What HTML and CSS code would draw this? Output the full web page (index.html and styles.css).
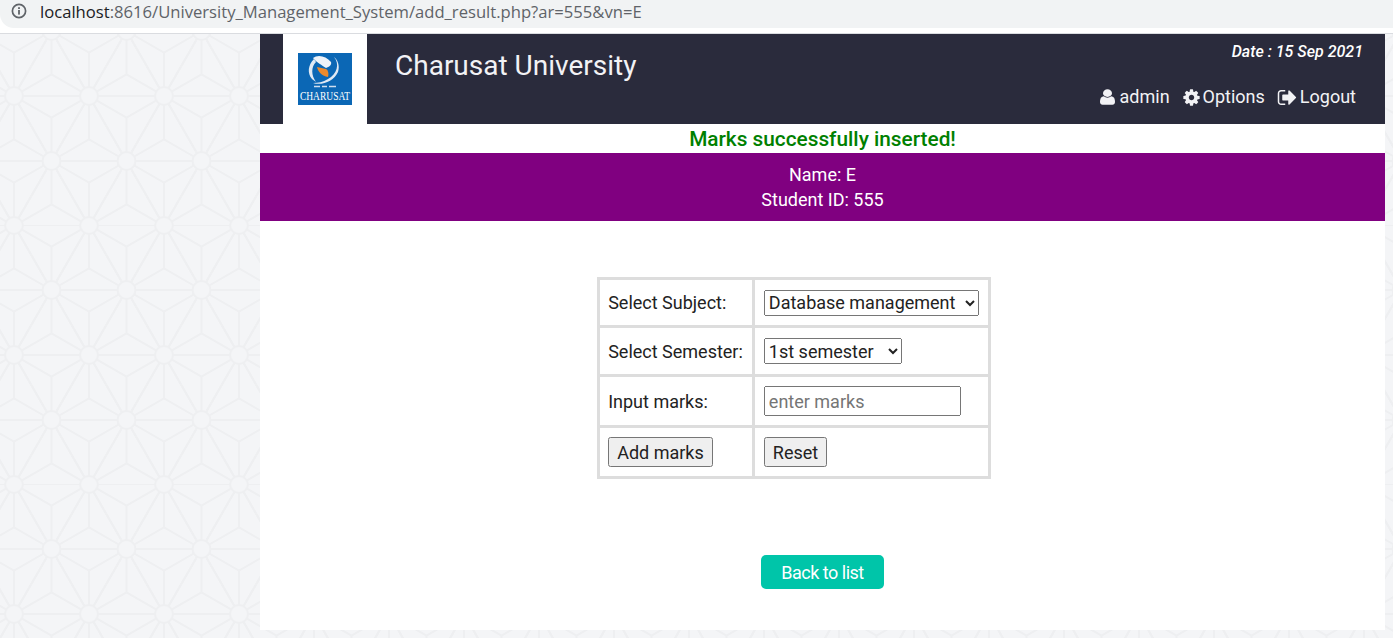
FILE: index.html
```html
<!DOCTYPE html>
<html lang="en">
<head>
  <meta charset="UTF-8" />
  <meta name="viewport" content="width=device-width, initial-scale=1.0"/>
  <title>Add Result</title>
  <link rel="stylesheet" href="styles.css">
</head>
<body>

  <div class="browser-bar">
    <div class="address">
      <svg class="info-icon" width="16" height="16" viewBox="0 0 16 16">
        <circle cx="8" cy="8" r="6.6" fill="none" stroke="#5f6368" stroke-width="1.7"/>
        <rect x="7.1" y="7" width="1.8" height="4.6" fill="#5f6368"/>
        <rect x="7.1" y="4.2" width="1.8" height="1.8" fill="#5f6368"/>
      </svg>
      <span class="url"><span class="host">localhost</span>:8616/University_Management_System/add_result.php?ar=555&amp;vn=E</span>
    </div>
  </div>

  <div class="page">
    <div class="header">
      <div class="logo-box">
        <svg width="54" height="52" viewBox="0 0 54 52">
          <rect width="54" height="52" fill="#0b67b5"/>
          <path d="M15 5 C20 1 28 3 33 9 C34 12 31 14 28 15 C24 12 19 10 15 5 Z" fill="#eef3f9"/>
          <path d="M16 6 C10 12 9 20 14 26 C15 27 17 28 18 29 C13 22 13 14 18 9 Z" fill="#dfe9f4"/>
          <path d="M36 4 C42 11 39 21 30 26 C25 29 20 30 15 30 C24 33 36 28 40 19 C42 13 40 7 36 4 Z" fill="#dfe9f4"/>
          <path d="M19 14 C20 19 24 23 30 24 C31 20 30 17 28 16 Z" fill="#ec8a2d"/>
          <path d="M16 33.5h6M24 33.5h5M31 33.5h7" stroke="#cfdef0" stroke-width="1.4"/>
          <text class="logo-text" x="27" y="37.6" transform="scale(1 1.25)">CHARUSAT</text>
        </svg>
      </div>
      <div class="site-title">Charusat University</div>
      <div class="header-right">
        <div class="date">Date : 15 Sep 2021</div>
        <div class="nav">
          <a class="nav-item">
            <svg class="nav-icon" width="21" height="18" viewBox="0 0 1792 1792" preserveAspectRatio="none"><path d="M1536 1399q0 109-62.5 187t-150.5 78h-854q-88 0-150.5-78t-62.5-187q0-85 8.5-160.5t31.5-152 58.5-131 94-89 134.5-34.5q131 128 313 128t313-128q76 0 134.5 34.5t94 89 58.5 131 31.5 152 8.5 160.5zm-256-887q0 159-112.5 271.5t-271.5 112.5-271.5-112.5-112.5-271.5 112.5-271.5 271.5-112.5 271.5 112.5 112.5 271.5z"/></svg>
            admin
          </a>
          <a class="nav-item">
            <svg class="nav-icon" width="19" height="19" viewBox="0 0 1792 1792"><path d="M1152 896q0-106-75-181t-181-75-181 75-75 181 75 181 181 75 181-75 75-181zm512-109v222q0 12-8 23t-20 13l-185 28q-19 54-39 91 35 50 107 138 10 12 10 25t-9 23q-27 37-99 108t-94 71q-12 0-26-9l-138-108q-44 23-91 38-16 136-29 186-7 28-36 28h-222q-14 0-24.5-8.5t-11.5-21.5l-28-184q-49-16-90-37l-141 107q-10 9-25 9-14 0-25-11-126-114-165-168-7-10-7-23 0-12 8-23 15-21 51-66.5t54-70.5q-27-50-41-99l-183-27q-13-2-21-12.5t-8-23.5v-222q0-12 8-23t19-13l186-28q14-46 39-92-40-57-107-138-10-12-10-24 0-10 9-23 26-36 98.5-107.5t94.5-71.5q13 0 26 10l138 107q44-23 91-38 16-136 29-186 7-28 36-28h222q14 0 24.5 8.5t11.5 21.5l28 184q49 16 90 37l142-107q9-9 24-9 13 0 25 10 129 119 165 170 7 8 7 22 0 12-8 23-15 21-51 66.5t-54 70.5q26 50 41 98l183 28q13 2 21 12.5t8 23.5z"/></svg>
            Options
          </a>
          <a class="nav-item">
            <svg class="nav-icon" width="21" height="21" viewBox="0 0 1792 1792"><path d="M704 1440q0 4 1 20t.5 26.5-3 23.5-10 19.5-20.5 6.5h-320q-119 0-203.5-84.5t-84.5-203.5v-704q0-119 84.5-203.5t203.5-84.5h320q13 0 22.5 9.5t9.5 22.5q0 4 1 20t.5 26.5-3 23.5-10 19.5-20.5 6.5h-320q-66 0-113 47t-47 113v704q0 66 47 113t113 47h312l11.5 1 11.5 3 8 5.5 7 9 2 13.5zm928-544q0 26-19 45l-544 544q-19 19-45 19t-45-19-19-45v-288h-448q-26 0-45-19t-19-45v-384q0-26 19-45t45-19h448v-288q0-26 19-45t45-19 45 19l544 544q19 19 19 45z"/></svg>
            Logout
          </a>
        </div>
      </div>
    </div>

    <div class="message">Marks successfully inserted!</div>

    <div class="student">
      <div>Name: E</div>
      <div>Student ID: 555</div>
    </div>

    <form class="marks-form">
      <table class="marks-table">
        <tr class="row-select">
          <td class="col-label">Select Subject:</td>
          <td class="col-field">
            <select class="subject-select">
              <option>Database management</option>
            </select>
          </td>
        </tr>
        <tr class="row-select">
          <td class="col-label">Select Semester:</td>
          <td class="col-field">
            <select class="semester-select">
              <option>1st semester</option>
            </select>
          </td>
        </tr>
        <tr class="row-input">
          <td class="col-label">Input marks:</td>
          <td class="col-field"><input type="text" placeholder="enter marks" /></td>
        </tr>
        <tr class="row-input">
          <td class="col-label"><button type="button">Add marks</button></td>
          <td class="col-field"><button type="reset">Reset</button></td>
        </tr>
      </table>
    </form>

    <div class="back-row">
      <a class="back-btn">Back to list</a>
    </div>
  </div>

</body>
</html>
```

FILE: styles.css
```css
body {
  margin: 0;
  height: 638px;
  overflow: hidden;
  font-family: Roboto, Arial, sans-serif;
  color: #222;
  background-color: #f4f5f7;
  background-image: url("data:image/svg+xml,%3Csvg xmlns='http://www.w3.org/2000/svg' xmlns:xlink='http://www.w3.org/1999/xlink' width='75' height='129.5' viewBox='0 0 75 129.5'%3E%3Cdefs%3E%3Cpath id='s' d='M0 0L75 0M0 0L-75 0M0 0L37.5 64.75M0 0L-37.5 64.75M0 0L37.5-64.75M0 0L-37.5-64.75M0 0L0 43.17M0 0L0-43.17M0 0L37.5 21.58M0 0L-37.5 21.58M0 0L37.5-21.58M0 0L-37.5-21.58'/%3E%3C/defs%3E%3Cg fill='none' stroke='%23eeeff1' stroke-width='2'%3E%3Cuse xlink:href='%23s'/%3E%3Cuse xlink:href='%23s' x='75'/%3E%3Cuse xlink:href='%23s' y='129.5'/%3E%3Cuse xlink:href='%23s' x='75' y='129.5'/%3E%3Cuse xlink:href='%23s' x='37.5' y='64.75'/%3E%3Cuse xlink:href='%23s' x='-37.5' y='64.75'/%3E%3Cuse xlink:href='%23s' x='112.5' y='64.75'/%3E%3C/g%3E%3Cg fill='%23f4f5f7' stroke='%23eeeff1' stroke-width='2'%3E%3Ccircle r='9'/%3E%3Ccircle cx='75' r='9'/%3E%3Ccircle cy='129.5' r='9'/%3E%3Ccircle cx='75' cy='129.5' r='9'/%3E%3Ccircle cx='37.5' cy='64.75' r='9'/%3E%3C/g%3E%3C/svg%3E");
  background-position: 14px 96px;
}

.browser-bar {
  height: 33px;
  background: white;
  border-bottom: 1px solid #dadce0;
}

.address {
  height: 28px;
  background: #f1f3f4;
  border-bottom-left-radius: 14px;
  display: flex;
  align-items: center;
  padding-left: 11px;
  padding-bottom: 6px;
  box-sizing: border-box;
}

.info-icon {
  flex: none;
}

.url {
  margin-left: 13px;
  font-family: "Open Sans", Arial, sans-serif;
  font-size: 16.64px;
  color: #5f6368;
  white-space: nowrap;
}

.host {
  color: #202124;
}

.page {
  width: 1125px;
  height: 596px;
  margin-left: 260px;
  background: white;
}

.header {
  height: 90px;
  padding-left: 23px;
  background: #2a2b3c;
  display: flex;
}

.logo-box {
  width: 84px;
  height: 90px;
  background: white;
  display: flex;
  align-items: center;
  justify-content: center;
}

.logo-text {
  font-family: "Liberation Serif", serif;
  font-size: 9.5px;
  fill: white;
  text-anchor: middle;
}

.site-title {
  margin-left: 28px;
  margin-top: 15px;
  font-size: 28px;
  line-height: 34px;
  color: #f2f2f5;
}

.header-right {
  margin-left: auto;
  padding-right: 22px;
  display: flex;
  flex-direction: column;
  align-items: flex-end;
}

.date {
  margin-top: 8px;
  font-size: 16px;
  line-height: 20px;
  font-style: italic;
  font-weight: 500;
  color: white;
}

.nav {
  margin-top: 22px;
  margin-right: 7px;
  display: flex;
  gap: 12px;
}

.nav-item {
  font-size: 18px;
  line-height: 26px;
  color: #f2f2f5;
  display: flex;
  align-items: center;
  gap: 2px;
}

.nav-icon {
  fill: #f2f2f5;
}

.message {
  height: 29px;
  line-height: 30px;
  font-size: 20.8px;
  font-weight: 500;
  text-align: center;
  color: green;
}

.student {
  height: 68px;
  padding-top: 9px;
  box-sizing: border-box;
  background: purple;
  color: white;
  font-size: 18px;
  line-height: 25px;
  text-align: center;
}

.marks-form {
  margin-top: 56px;
  display: flex;
  justify-content: center;
  padding-right: 57px;
}

.marks-table {
  border-collapse: collapse;
  font-size: 18px;
}

.marks-table td {
  border: 3px solid #ddd;
  padding: 0 9px;
}

.marks-table .col-label {
  width: 134px;
  padding-left: 8px;
  white-space: nowrap;
}

.col-field {
  width: 213px;
}

.row-select td {
  height: 46px;
}

.row-select:first-child td {
  height: 45px;
}

.row-input td {
  height: 48px;
}

select, input, button {
  font-family: Roboto, Arial, sans-serif;
  font-size: 18px;
  color: #222;
}

select {
  display: block;
  height: 26px;
}

.subject-select {
  width: 215px;
}

.semester-select {
  width: 138px;
}

input {
  display: block;
  width: 197px;
  height: 30px;
  padding: 0 3px;
  box-sizing: border-box;
}

button {
  display: block;
  height: 30px;
  padding: 0 7px;
}

.back-row {
  margin-top: 76px;
  display: flex;
  justify-content: center;
}

.back-btn {
  width: 123px;
  height: 34px;
  line-height: 36px;
  background: #00c5a9;
  color: white;
  font-size: 18px;
  letter-spacing: -0.5px;
  text-align: center;
  border-radius: 5px;
}
```
